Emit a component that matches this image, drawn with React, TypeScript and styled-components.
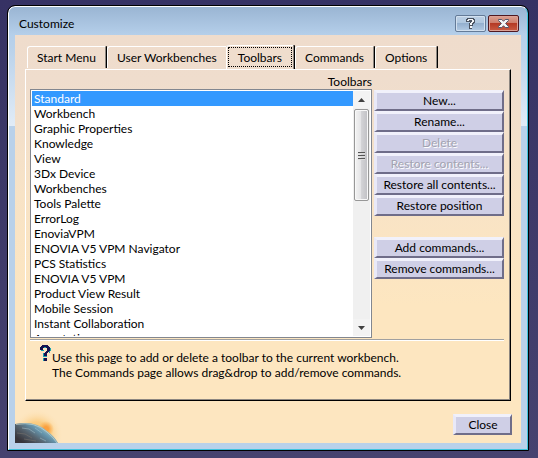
import React, { useState } from "react";
import styled, { createGlobalStyle, css } from "styled-components";

const GlobalStyle = createGlobalStyle`
  *, *::before, *::after { box-sizing: border-box; }
  body { margin: 0; }
  body, button {
    font-family: Lato, "Noto Sans", sans-serif;
    font-size: 12px;
    line-height: 15px;
    color: #000;
  }
`;

const Desktop = styled.main`
  min-height: 100vh;
  padding: 5px 9px 7px 7px;
  background: linear-gradient(#363264, #46426f);
`;

const WindowFrame = styled.section`
  display: flex;
  flex-direction: column;
  padding: 0 6px 6px;
  border: 1px solid;
  border-color: #fff #3fc3dc #3fc3dc #fff;
  border-radius: 7px 7px 0 0;
  outline: 1px solid #000;
  outline-offset: 0;
  margin: 1px;
  background:
    linear-gradient(#9ab5d3, #b5cfea 28px, #b9d1ea 40px, #e1ecf7 119px, #b9d1ea 119px);
`;

const TitleBar = styled.header`
  display: flex;
  align-items: flex-start;
  height: 28px;
  padding: 8px 2px 0 4px;
`;

const Title = styled.h1`
  flex: 1;
  margin: 0;
  padding-top: 1px;
  font-size: 12px;
  font-weight: 400;
`;

const CaptionButton = styled.button<{ $danger?: boolean }>`
  display: grid;
  place-items: center;
  width: 31px;
  height: 17px;
  margin-left: 2px;
  padding: 0;
  border: 1px solid ${(p) => (p.$danger ? "#501820" : "#647b98")};
  border-radius: 2px;
  box-shadow: inset 0 0 0 1px ${(p) => (p.$danger ? "#dca196" : "#d2e0ef")};
  background: ${(p) =>
    p.$danger
      ? "linear-gradient(#dba092, #ce7e6c 45%, #b53a25 50%, #c95c43)"
      : "linear-gradient(#bdd0e5, #afc7df 45%, #94b0cf 50%, #b3cbe4)"};
`;

const Client = styled.div`
  padding: 10px 10px 8px;
  background: linear-gradient(#efdccc, #efddcd 45px, #f8e3c6 160px, #fde6c0 270px);
  position: relative;
  overflow: hidden;
`;

const TabList = styled.div`
  display: flex;
  align-items: flex-end;
  height: 24px;
  padding-left: 2px;
`;

const Tab = styled.button<{ $active: boolean }>`
  height: 22px;
  margin-bottom: 1px;
  padding: 0 9px;
  border: 1px solid #fff;
  border-right-color: #8d8781;
  border-bottom: 0;
  border-radius: 3px 1px 0 0;
  box-shadow: 1px 2px 0 -1px #000, 1px 0 0 #000;
  clip-path: inset(0 -1px 0 0);
  background: transparent;
  white-space: nowrap;
  & + & { margin-left: 1px; }
  ${(p) =>
    p.$active &&
    css`
      height: 24px;
      margin-bottom: 0;
      padding: 0 11px;
      background: #efddcd;
      outline: 1px dotted #000;
      outline-offset: -3px;
      && { margin-left: -1px; }
    `}
`;

const Panel = styled.div`
  display: flex;
  flex-direction: column;
  padding: 4px 5px 0 4px;
  border: 1px solid #fff;
  border-right-color: #000;
  border-bottom: 1px solid #000;
  box-shadow: inset -1px -1px #8d8781;
`;

const Columns = styled.div`
  display: grid;
  grid-template-columns: minmax(0, 1fr) 130px;
  column-gap: 2px;
  padding-right: 1px;
`;

const ListHeading = styled.h2`
  margin: 0;
  font-size: 12px;
  font-weight: 400;
  text-align: right;
`;

const ListBox = styled.div`
  display: flex;
  height: 249px;
  padding: 1px;
  border: 1px solid #828790;
  background: #fff;
`;

const Items = styled.ul`
  flex: 1;
  margin: 0;
  padding: 0;
  overflow: hidden;
  list-style: none;
`;

const Item = styled.li<{ $selected: boolean }>`
  height: 15px;
  padding-left: 2px;
  cursor: default;
  color: ${(p) => (p.$selected ? "#fff" : "#000")};
  background: ${(p) => (p.$selected ? "#3399ff" : "transparent")};
`;

const ScrollBar = styled.div`
  display: flex;
  flex-direction: column;
  width: 17px;
  background: #f0f0f0;
`;

const ScrollArrow = styled.button`
  display: grid;
  place-items: center;
  height: 17px;
  padding: 0;
  border: 0;
  background: #f3f3f3;
`;

const ScrollTrack = styled.div`
  flex: 1;
  padding: 1px;
`;

const ScrollThumb = styled.div`
  display: grid;
  place-items: center;
  height: 92px;
  border: 1px solid #979797;
  border-radius: 2px;
  box-shadow: inset 0 0 0 1px #f8f8f8;
  background: linear-gradient(90deg, #f3f3f3, #e4e4e6 45%, #d3d3d6 50%, #bfbfc3);
`;

const Actions = styled.div`
  display: flex;
  flex-direction: column;
  gap: 21px;
  padding-top: 1px;
`;

const ActionGroup = styled.div`
  display: flex;
  flex-direction: column;
`;

const BevelButton = styled.button`
  height: 21px;
  padding: 0 4px;
  border: solid;
  border-width: 3px 2px 2px 3px;
  border-color: #f1f1fb #6f6d89 #6f6d89 #e9e9f8;
  background: #cfcfe6;
  line-height: 14px;
  white-space: nowrap;
  &:disabled {
    color: #a3a3b0;
    text-shadow: 1px 1px #fff;
  }
`;

const Divider = styled.hr`
  width: calc(100% - 1px);
  height: 2px;
  margin: 1px 0 0;
  border: 0;
  border-top: 1px solid #a0a0a0;
  border-bottom: 1px solid #fff;
`;

const Help = styled.div`
  display: flex;
  align-items: flex-start;
  min-height: 59px;
  padding: 4px 0 0 10px;
  svg { flex: none; }
`;

const HelpText = styled.p`
  margin: 0;
  padding-top: 5px;
`;

const Footer = styled.footer`
  display: flex;
  justify-content: flex-end;
  padding: 13px 0 0;
  margin-right: -1px;
`;

const CloseButton = styled(BevelButton)`
  width: 59px;
`;

const Planet = styled.svg`
  position: absolute;
  left: 0;
  bottom: 0;
`;

const TABS = ["Start Menu", "User Workbenches", "Toolbars", "Commands", "Options"];

const TOOLBARS = [
  "Standard",
  "Workbench",
  "Graphic Properties",
  "Knowledge",
  "View",
  "3Dx Device",
  "Workbenches",
  "Tools Palette",
  "ErrorLog",
  "EnoviaVPM",
  "ENOVIA V5 VPM Navigator",
  "PCS Statistics",
  "ENOVIA V5 VPM",
  "Product View Result",
  "Mobile Session",
  "Instant Collaboration",
  "Annotations",
];

const ACTIONS = [
  [
    { label: "New..." },
    { label: "Rename..." },
    { label: "Delete", disabled: true },
    { label: "Restore contents...", disabled: true },
    { label: "Restore all contents..." },
    { label: "Restore position" },
  ],
  [{ label: "Add commands..." }, { label: "Remove commands..." }],
];

const QuestionGlyph = () => (
  <svg width="9" height="11" viewBox="0 0 9 11" aria-hidden="true" shapeRendering="crispEdges">
    <path d="M1 0H8V1H9V5H8V6H7V8H6V11H3V5H4V4H0V1H1Z" fill="#4a5361" />
    <path d="M2 1H7V2H8V4H7V5H6V7H4V5H5V4H6V2H3V3H1V2H2ZM4 8H6V10H4Z" fill="#f4f6f9" />
  </svg>
);

const CrossGlyph = () => (
  <svg width="13" height="11" viewBox="0 0 13 11" aria-hidden="true">
    <path
      d="M1.5 1.5H4.8L6.5 3.3L8.2 1.5H11.5V2.5L8.6 5.5L11.5 8.5V9.5H8.2L6.5 7.7L4.8 9.5H1.5V8.5L4.4 5.5L1.5 2.5Z"
      fill="#f5f5f5"
      stroke="#53566b"
    />
  </svg>
);

const HelpIcon = () => (
  <svg width="12" height="17" viewBox="0 0 12 17" fill="none" aria-hidden="true" shapeRendering="crispEdges">
    <path d="M1 5H4V6H1ZM3 8H4V11H3ZM3 11H7V12H3ZM3 13H4V16H3ZM4 2H6V3H4ZM10 3H11V6H10ZM9 6H10V8H9Z" fill="#16a3ae" />
    <path
      d="M2 0H8V1H9V2H10V6H9V7H8V8H7V11H4V8H5V7H6V6H7V3H6V2H4V3H3V5H0V2H1V1H2ZM4 13H7V16H4Z"
      fill="#17134f"
    />
  </svg>
);

const PlanetArt = () => (
  <Planet width="56" height="34" viewBox="0 0 56 34" aria-hidden="true">
    <defs>
      <radialGradient id="glow" cx="22" cy="26" r="26" gradientUnits="userSpaceOnUse">
        <stop offset="0" stopColor="#f9bd5e" />
        <stop offset="0.5" stopColor="#fac774" stopOpacity="0.8" />
        <stop offset="1" stopColor="#fde6c0" stopOpacity="0" />
      </radialGradient>
      <radialGradient id="sun" cx="31" cy="20" r="8" gradientUnits="userSpaceOnUse">
        <stop offset="0.3" stopColor="#fba03f" />
        <stop offset="1" stopColor="#fbb050" stopOpacity="0" />
      </radialGradient>
      <linearGradient id="globe" x1="12" y1="36" x2="27" y2="14" gradientUnits="userSpaceOnUse">
        <stop offset="0" stopColor="#37343a" />
        <stop offset="0.4" stopColor="#56636e" />
        <stop offset="0.7" stopColor="#6595ad" />
        <stop offset="1" stopColor="#b4cfce" />
      </linearGradient>
    </defs>
    <rect width="56" height="34" fill="url(#glow)" />
    <circle cx="31" cy="20" r="8" fill="url(#sun)" />
    <path d="M0 15Q20 11 32 22Q39 27 43 34H0Z" fill="url(#globe)" />
    <path d="M1 15.5Q20 12 32 23Q38 28 42 34" stroke="#cfdfd4" opacity="0.6" fill="none" />
    <path d="M7 19L14 20L20 24M20 19L27 24M25 29L31 32" stroke="#a9c3cb" opacity="0.5" fill="none" />
    <path d="M2 24L10 25L17 29M9 30L21 32" stroke="#76716d" opacity="0.6" fill="none" />
  </Planet>
);

export default function App() {
  const [tab, setTab] = useState("Toolbars");
  const [selected, setSelected] = useState("Standard");

  return (
    <Desktop>
      <GlobalStyle />
      <WindowFrame role="dialog" aria-labelledby="window-title">
        <TitleBar>
          <Title id="window-title">Customize</Title>
          <CaptionButton aria-label="Help">
            <QuestionGlyph />
          </CaptionButton>
          <CaptionButton $danger aria-label="Close window">
            <CrossGlyph />
          </CaptionButton>
        </TitleBar>
        <Client>
          <PlanetArt />
          <TabList role="tablist">
            {TABS.map((name) => (
              <Tab
                key={name}
                role="tab"
                aria-selected={name === tab}
                $active={name === tab}
                onClick={() => setTab(name)}
              >
                {name}
              </Tab>
            ))}
          </TabList>
          <Panel role="tabpanel" aria-label={tab}>
            <Columns>
              <ListHeading id="list-heading">Toolbars</ListHeading>
              <span />
              <ListBox>
                <Items role="listbox" aria-labelledby="list-heading" tabIndex={0}>
                  {TOOLBARS.map((name) => (
                    <Item
                      key={name}
                      role="option"
                      aria-selected={name === selected}
                      $selected={name === selected}
                      onClick={() => setSelected(name)}
                    >
                      {name}
                    </Item>
                  ))}
                </Items>
                <ScrollBar>
                  <ScrollArrow aria-label="Scroll up">
                    <svg width="7" height="4" viewBox="0 0 7 4" aria-hidden="true">
                      <path d="M0 4L3.5 0L7 4Z" fill="#404040" />
                    </svg>
                  </ScrollArrow>
                  <ScrollTrack>
                    <ScrollThumb>
                      <svg width="7" height="9" viewBox="0 0 7 9" aria-hidden="true">
                        <path d="M0 1.5H7M0 4.5H7M0 7.5H7" stroke="#555" />
                        <path d="M0 2.5H7M0 5.5H7M0 8.5H7" stroke="#ddd" />
                      </svg>
                    </ScrollThumb>
                  </ScrollTrack>
                  <ScrollArrow aria-label="Scroll down">
                    <svg width="7" height="4" viewBox="0 0 7 4" aria-hidden="true">
                      <path d="M0 0H7L3.5 4Z" fill="#404040" />
                    </svg>
                  </ScrollArrow>
                </ScrollBar>
              </ListBox>
              <Actions>
                {ACTIONS.map((group) => (
                  <ActionGroup key={group[0].label}>
                    {group.map((action) => (
                      <BevelButton key={action.label} disabled={"disabled" in action && action.disabled}>
                        {action.label}
                      </BevelButton>
                    ))}
                  </ActionGroup>
                ))}
              </Actions>
            </Columns>
            <Divider />
            <Help>
              <HelpIcon />
              <HelpText>
                Use this page to add or delete a toolbar to the current workbench.
                <br />
                The Commands page allows drag&amp;drop to add/remove commands.
              </HelpText>
            </Help>
          </Panel>
          <Footer>
            <CloseButton>Close</CloseButton>
          </Footer>
        </Client>
      </WindowFrame>
    </Desktop>
  );
}
